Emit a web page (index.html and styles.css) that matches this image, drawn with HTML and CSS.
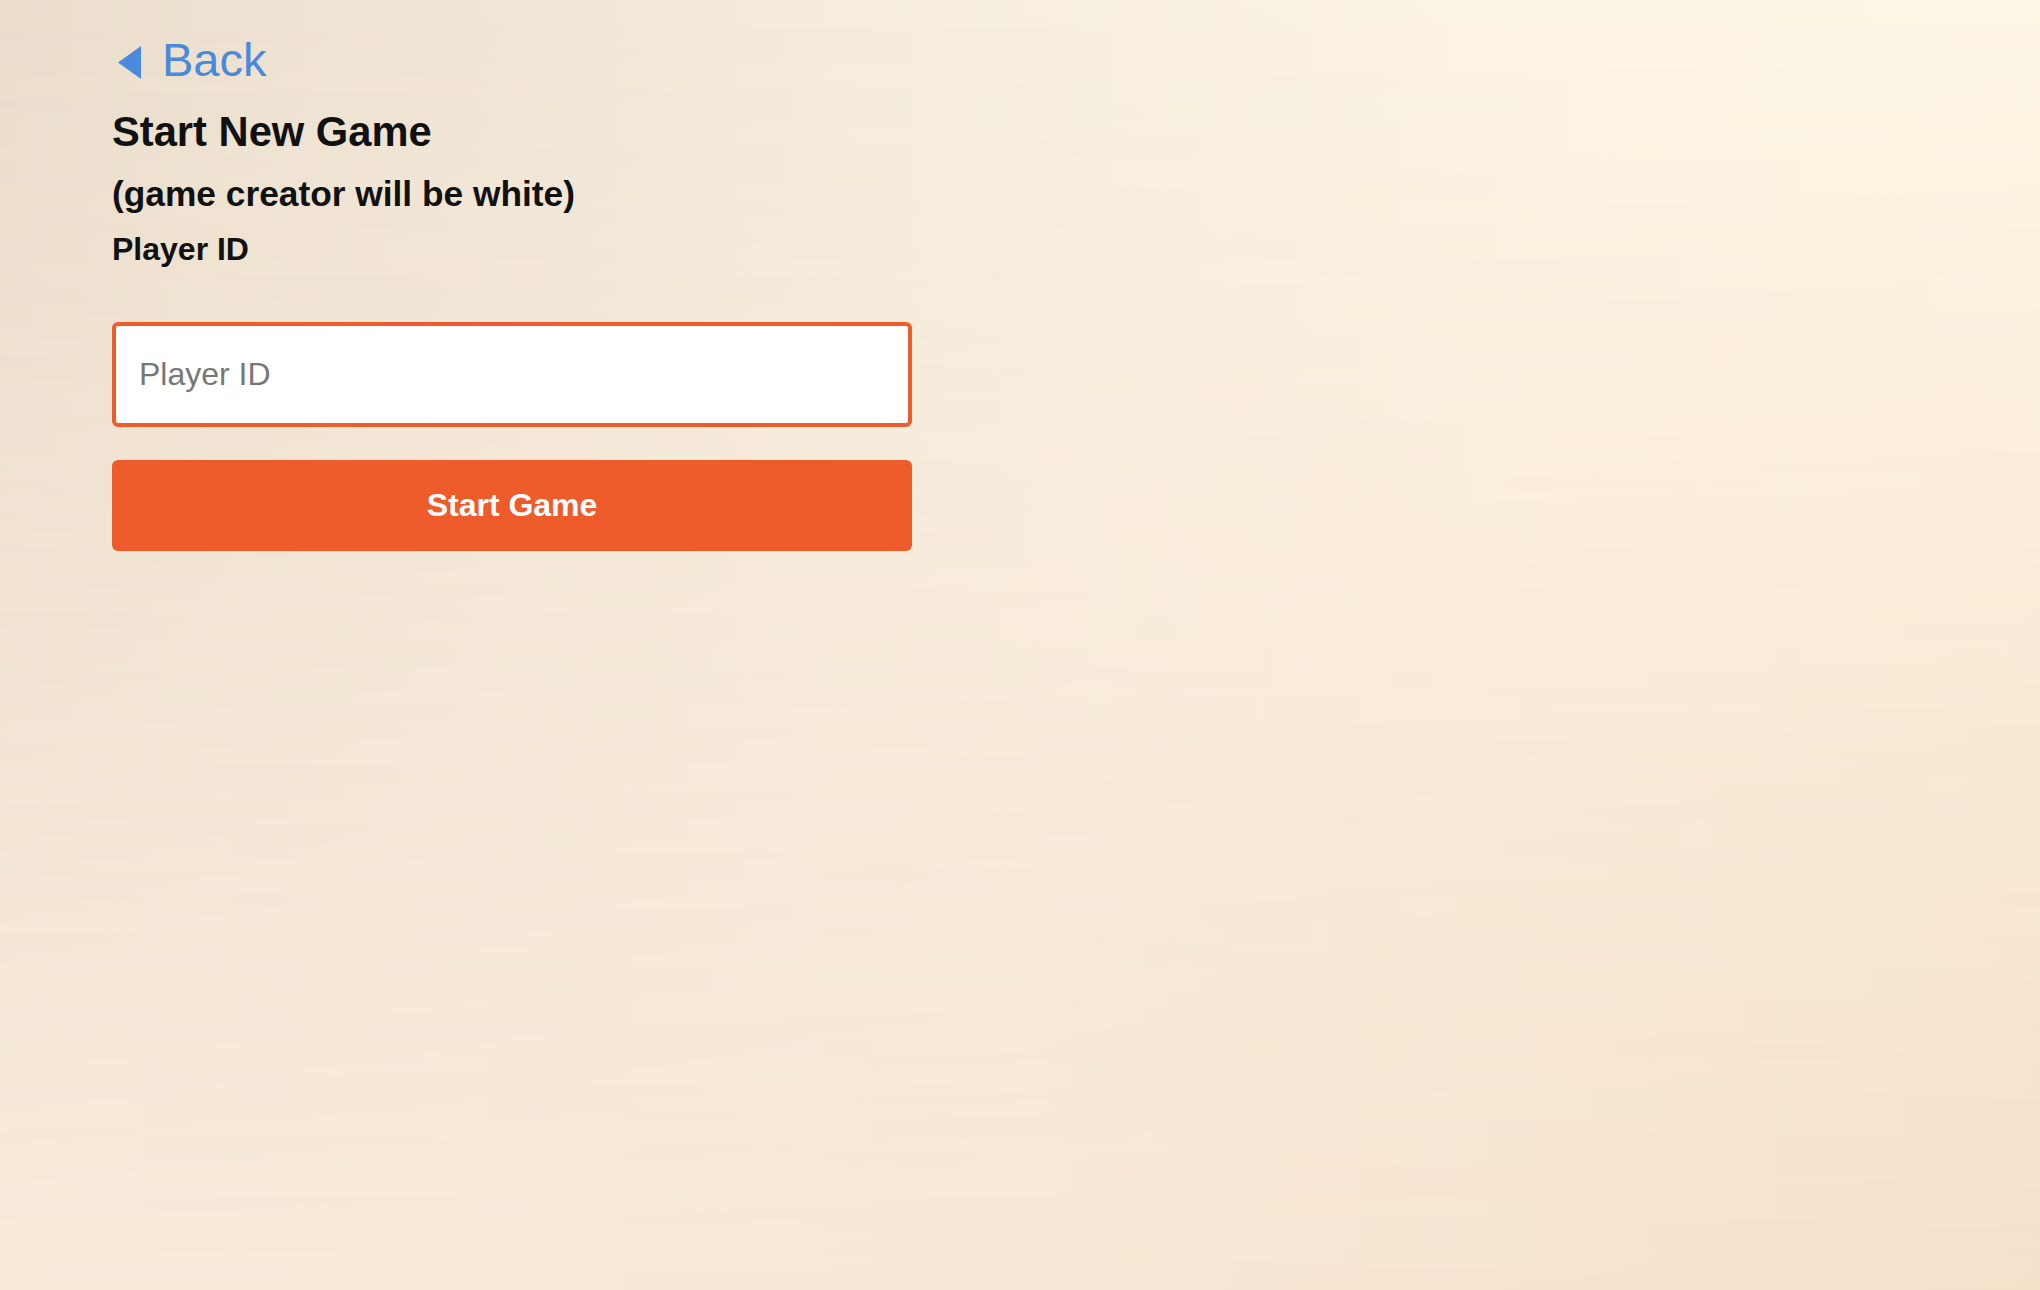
FILE: index.html
```html
<!DOCTYPE html>
<html lang="en">
<head>
<meta charset="utf-8">
<title>Start New Game</title>
<link rel="stylesheet" href="styles.css">
</head>
<body>
<div class="page">
  <a class="back" href="#">
    <svg class="back-arrow" width="23" height="33" viewBox="0 0 23 33" aria-hidden="true"><polygon points="23,0 23,33 0,16.5" fill="#4A89DC"/></svg>
    <span class="back-text">Back</span>
  </a>
  <h1 class="title">Start New Game</h1>
  <h2 class="subtitle">(game creator will be white)</h2>
  <label class="label" for="pid">Player ID</label>
  <input class="input" id="pid" type="text" placeholder="Player ID">
  <button class="btn" type="button">Start Game</button>
</div>
</body>
</html>
```
FILE: styles.css
```css
html, body {
  margin: 0;
  padding: 0;
  min-height: 100%;
}
body {
  min-height: 1290px;
  font-family: "Liberation Sans", Arial, Helvetica, sans-serif;
  color: #111;
  background-color: #F7ECDC;
  position: relative;
  background-image: linear-gradient(to right, #EADDCC 0%, #F5ECDD 40%, #FCF4E3 75%, #FDF6E4 100%);
}
body::before {
  content: "";
  position: absolute;
  inset: 0;
  background-image: linear-gradient(to right, #F8EBDA 0%, #F8E8D6 50%, #F5E0CA 100%);
  -webkit-mask-image: linear-gradient(to bottom, transparent 0%, rgba(0,0,0,0.5) 50%, #000 100%);
  mask-image: linear-gradient(to bottom, transparent 0%, rgba(0,0,0,0.5) 50%, #000 100%);
  pointer-events: none;
}
.page {
  position: relative;
  z-index: 1;
  padding: 34px 0 0 112px;
  width: 800px;
  display: flex;
  flex-direction: column;
}
.back {
  display: flex;
  align-items: flex-start;
  height: 52px;
  text-decoration: none;
  color: #4A89DC;
}
.back-arrow {
  display: block;
  margin: 12px 0 0 6px;
}
.back-text {
  font-size: 47px;
  line-height: 52px;
  margin-left: 21px;
}
.title {
  margin: 22px 0 0;
  font-size: 41.7px;
  line-height: 48px;
  font-weight: bold;
}
.subtitle {
  margin: 18px 0 0;
  font-size: 35.3px;
  line-height: 40px;
  font-weight: bold;
}
.label {
  margin: 17px 0 0;
  font-size: 32px;
  line-height: 36px;
  font-weight: bold;
}
.input {
  margin: 55px 0 0;
  box-sizing: border-box;
  width: 800px;
  height: 105px;
  border: 4px solid #EE5C2B;
  border-radius: 6px;
  background: #fff;
  padding: 0 23px;
  font-family: "Liberation Sans", Arial, Helvetica, sans-serif;
  font-size: 32px;
  color: #111;
  outline: none;
}
.input::placeholder {
  color: #777;
  opacity: 1;
}
.btn {
  margin: 33px 0 0;
  width: 800px;
  height: 91px;
  border: none;
  border-radius: 6px;
  background: #EE5C2B;
  color: #fff;
  font-family: "Liberation Sans", Arial, Helvetica, sans-serif;
  font-size: 32px;
  font-weight: bold;
  cursor: pointer;
}
```
